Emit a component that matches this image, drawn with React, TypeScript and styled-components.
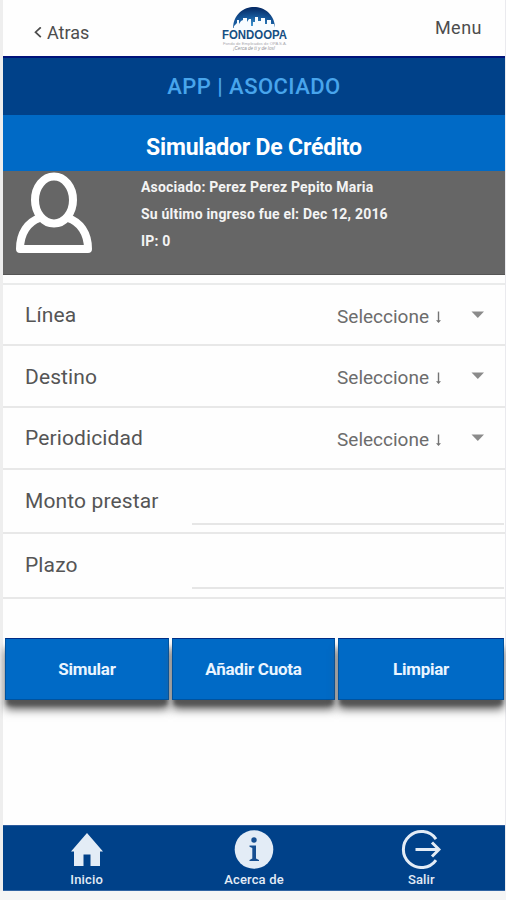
import React from "react";
import styled, { createGlobalStyle } from "styled-components";

const GlobalStyle = createGlobalStyle`
  * { box-sizing: border-box; }
  body { margin: 0; background: #f5f5f5; font-family: Roboto, sans-serif; }
`;

const Page = styled.div`
  width: 506px;
  height: 900px;
  overflow: hidden;
  background: #f5f5f5;
`;

const Screen = styled.main`
  display: flex;
  flex-direction: column;
  width: 502px;
  height: 891px;
  margin-left: 3px;
  background: #fefefe;
  box-shadow: -4px 0 0 #eeeeee, 1px 0 0 #eaeaee;
`;

const TopBar = styled.header`
  display: grid;
  grid-template-columns: 1fr 72px 1fr;
  align-items: start;
  height: 56px;
  color: #4d4d4d;
  font-size: 18px;
  line-height: 20px;
`;

const BackLink = styled.div`
  display: flex;
  align-items: center;
  gap: 5px;
  padding: 23px 0 0 31px;
`;

const MenuLink = styled.div`
  padding: 18px 23px 0 0;
  text-align: right;
  letter-spacing: 0.5px;
`;

const Brand = styled.div`
  display: flex;
  padding-top: 4px;
`;

const AppBand = styled.div`
  height: 59px;
  border-top: 2px solid #00137a;
  background: #004189;
  color: #48a5ec;
  text-align: center;
  font-size: 22px;
  font-weight: 500;
  line-height: 58px;
  letter-spacing: 0.45px;
`;

const TitleBand = styled.h1`
  height: 56px;
  margin: 0;
  background: #006ac6;
  color: #fff;
  text-align: center;
  font-size: 23px;
  font-weight: 700;
  line-height: 65px;
  letter-spacing: -0.2px;
`;

const Profile = styled.section`
  display: grid;
  grid-template-columns: 138px 1fr;
  height: 104px;
  background: #666;
  border-bottom: 1px solid #555;
`;

const Avatar = styled.svg`
  margin: 1px 0 0 12px;
`;

const ProfileLines = styled.div`
  padding-top: 3px;
  color: #f4f4f4;
  font-size: 14px;
  font-weight: 700;
  line-height: 27px;
  letter-spacing: 0.2px;
`;

const Form = styled.section`
  margin-top: 8px;
  border-top: 2px solid #eaebeb;
`;

const Row = styled.div<{ $height: number }>`
  display: grid;
  grid-template-columns: 188px 1fr;
  height: ${(p) => p.$height}px;
  border-bottom: 2px solid #e8e8e8;
`;

const Label = styled.label<{ $top: number }>`
  padding: ${(p) => p.$top}px 0 0 22px;
  color: #555;
  font-size: 21px;
  line-height: 25px;
  letter-spacing: 0.12px;
  white-space: nowrap;
`;

const SelectBox = styled.div`
  display: flex;
  justify-content: flex-end;
  padding: 20px 20px 0 0;
  color: #6c6c6c;
  font-size: 19px;
  line-height: 24px;
`;

const Caret = styled.svg`
  margin: 6px 0 0 29px;
`;

const DownMark = styled.svg`
  margin: 5px 0 0 6px;
`;

const Field = styled.div<{ $gap: number }>`
  margin: 0 1px ${(p) => p.$gap}px 1px;
  border-bottom: 2px solid #e6e6e6;
`;

const Actions = styled.div`
  display: grid;
  grid-template-columns: 164px 163px 166px;
  gap: 3px;
  margin: 39px 0 0 2px;
`;

const Action = styled.button`
  height: 62px;
  padding: 0;
  border: 1px solid #00539f;
  border-top-color: #002c85;
  background: #006ac6;
  box-shadow: 0 10px 9px -1px #555, 0 7px 4px -2px #555;
  color: #eaf5ff;
  font: 700 17px Roboto, sans-serif;
  letter-spacing: -0.25px;
`;

const Footer = styled.nav`
  display: grid;
  grid-template-columns: repeat(3, 1fr);
  height: 66px;
  margin-top: auto;
  border-top: 1px solid #2c5b9c;
  border-bottom: 1px solid #3164a3;
  background: #004189;
`;

const Tab = styled.div`
  display: flex;
  flex-direction: column;
  align-items: center;
  padding-top: 3px;
  color: #e3ecf6;
  font-size: 13px;
  font-weight: 500;
  line-height: 18px;
  letter-spacing: 0.15px;
  svg { display: block; flex: none; margin-bottom: 2px; }
`;

const Logo = () => (
  <svg width="72" height="51" viewBox="-3 0 72 51">
    <defs>
      <radialGradient id="dome" cx="50%" cy="100%" r="95%">
        <stop offset="0" stopColor="#4ba8df" />
        <stop offset=".55" stopColor="#17599c" />
        <stop offset="1" stopColor="#062c67" />
      </radialGradient>
    </defs>
    <path d="M12 24C13 -4 53 -4 54 24Z" fill="url(#dome)" />
    <path d="M12 27L13 22L16 19V16H18V20L20 17L22 16V14H26V18L28 15H30V22H32V18H34V13H37V17H40V14H44V20H46V16H50V20L53 20L55 27Z" fill="#f8fcff" />
    <text x="1" y="35.4" fontFamily="Liberation Sans" fontSize="12.5" fontWeight="700" fill="#174f83" textLength="65" lengthAdjust="spacingAndGlyphs">FONDOOPA</text>
    <text x="2" y="40.5" fontFamily="Liberation Sans" fontSize="3.5" fill="#aaaaae" textLength="64" lengthAdjust="spacingAndGlyphs">Fondo de Empleados de OPA S.A.</text>
    <text x="12" y="46.3" fontFamily="Liberation Sans" fontSize="4.5" fontStyle="italic" fill="#909095" textLength="42" lengthAdjust="spacingAndGlyphs">¡Cerca de ti y de los!</text>
  </svg>
);

const selects = [
  { label: "Línea", height: 61, top: 18 },
  { label: "Destino", height: 62, top: 19 },
  { label: "Periodicidad", height: 62, top: 18 },
];

const fields = [
  { label: "Monto prestar", height: 64, gap: 7, top: 19 },
  { label: "Plazo", height: 65, gap: 8, top: 19 },
];

export default function App() {
  return (
    <Page>
      <GlobalStyle />
      <Screen>
        <TopBar>
          <BackLink>
            <svg width="8" height="12" viewBox="0 0 8 12" fill="none" stroke="#4d4d4d" strokeWidth="1.7">
              <path d="M6.8 .3L1.5 5.2L6.8 10.2" />
            </svg>
            Atras
          </BackLink>
          <Brand><Logo /></Brand>
          <MenuLink>Menu</MenuLink>
        </TopBar>
        <AppBand>APP | ASOCIADO</AppBand>
        <TitleBand>Simulador De Crédito</TitleBand>
        <Profile>
          <Avatar width="78" height="83" viewBox="0 0 78 83" fill="none" stroke="#fff" strokeWidth="8" strokeLinejoin="round">
            <ellipse cx="39" cy="28" rx="19" ry="23.5" />
            <path d="M24.5 46C13 50 5 61 5 77H73C73 61 65 50 53 46" />
          </Avatar>
          <ProfileLines>
            <div>Asociado: Perez Perez Pepito Maria</div>
            <div>Su último ingreso fue el: Dec 12, 2016</div>
            <div>IP: 0</div>
          </ProfileLines>
        </Profile>
        <Form>
          {selects.map((s) => (
            <Row key={s.label} $height={s.height}>
              <Label $top={s.top}>{s.label}</Label>
              <SelectBox>
                Seleccione
                <DownMark width="7" height="14" viewBox="0 0 7 14" fill="#747474">
                  <path d="M2.8 1.5H4.2V10.2H6L3.5 13L1 10.2H2.8Z" />
                </DownMark>
                <Caret width="14" height="8" viewBox="0 0 14 8" fill="#8b8b8b">
                  <path d="M.5 .5H13L6.8 7Z" />
                </Caret>
              </SelectBox>
            </Row>
          ))}
          {fields.map((f) => (
            <Row key={f.label} $height={f.height}>
              <Label $top={f.top}>{f.label}</Label>
              <Field $gap={f.gap} />
            </Row>
          ))}
        </Form>
        <Actions>
          <Action>Simular</Action>
          <Action>Añadir Cuota</Action>
          <Action>Limpiar</Action>
        </Actions>
        <Footer>
          <Tab>
            <svg width="40" height="40" viewBox="0 0 40 40" fill="#e3ecf6">
              <path d="M20 4L36 22.5H33V37H23.5V25.5H16.5V37H7V22.5H4Z" />
            </svg>
            Inicio
          </Tab>
          <Tab>
            <svg width="40" height="40" viewBox="0 0 40 40">
              <circle cx="20" cy="20.5" r="19.3" fill="#e3ecf6" />
              <circle cx="20" cy="11" r="2.7" fill="#174f91" />
              <path d="M15.5 16.5H22V29.5L25 31V32H15.5V31L18.3 29.5V19L15.5 17.7Z" fill="#174f91" />
            </svg>
            Acerca de
          </Tab>
          <Tab>
            <svg width="40" height="40" viewBox="0 0 40 40" fill="none" stroke="#e3ecf6" strokeWidth="3">
              <path d="M35 10A18 18 0 1 0 35 31" />
              <path d="M14.5 20.5H38M31 13.5L38 20.5L31 27.5" />
            </svg>
            Salir
          </Tab>
        </Footer>
      </Screen>
    </Page>
  );
}
